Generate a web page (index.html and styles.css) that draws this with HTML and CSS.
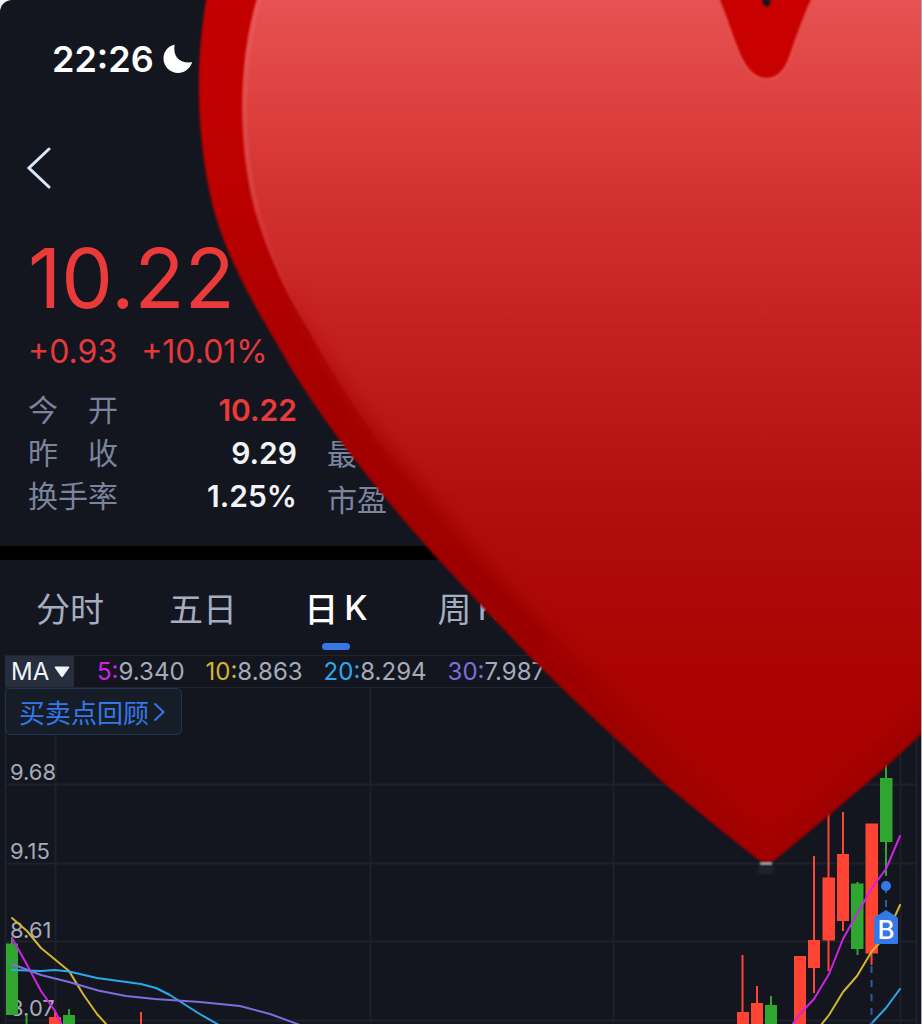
FILE: index.html
```html
<!DOCTYPE html>
<html lang="zh-CN">
<head>
<meta charset="utf-8">
<meta name="viewport" content="width=device-width, initial-scale=1">
<title>日K</title>
<link rel="stylesheet" href="styles.css">
</head>
<body>
<div class="app">
  <header class="status">
    <time>22:26</time>
    <svg class="moon" viewBox="0 0 30 30" aria-hidden="true"><path d="M11.500 .5 C10 13 16 19.500 29.200 18.300 C26.500 25.500 21 29 15.200 29 C7 29 .5 22.500 .5 14.500 C.5 8 4.500 2.500 11.500 .5 Z"/></svg>
  </header>
  <nav class="nav">
    <button class="back" type="button" aria-label="返回">
      <svg viewBox="0 0 24 42" aria-hidden="true"><path d="M22 2 L2 21 L22 40"/></svg>
    </button>
  </nav>
  <main>
    <section class="quote">
      <div class="price">10.22</div>
      <div class="change"><span>+0.93</span><span>+10.01%</span></div>
      <div class="stats">
        <dl class="list">
          <div class="row"><dt>今　开</dt><dd class="up">10.22</dd></div>
          <div class="row"><dt>昨　收</dt><dd>9.29</dd></div>
          <div class="row"><dt>换手率</dt><dd>1.25%</dd></div>
        </dl>
        <ul class="more"><li>最</li><li>市盈</li></ul>
      </div>
    </section>
    <section class="kline">
      <div class="tabs">
        <button class="tab" type="button">分时</button>
        <button class="tab" type="button">五日</button>
        <button class="tab active" type="button"><span>日</span><span>K</span></button>
        <button class="tab" type="button"><span>周</span><span>K</span></button>
      </div>
      <div class="averages">
        <label class="picker">
          <select aria-label="指标"><option>MA</option></select>
          <svg viewBox="0 0 16 12" aria-hidden="true"><path d="M1.500 .5 H14.500 Q16 .5 15 2 L9 10.500 Q8 12 7 10.500 L1 2 Q0 .5 1.500 .5Z"/></svg>
        </label>
        <span class="avg"><b class="ma5">5:</b>9.340</span>
        <span class="avg"><b class="ma10">10:</b>8.863</span>
        <span class="avg"><b class="ma20">20:</b>8.294</span>
        <span class="avg"><b class="ma30">30:</b>7.987</span>
      </div>
      <div class="chart">
        <a class="review" href="#review">买卖点回顾<svg viewBox="0 0 12 20" aria-hidden="true"><path d="M1.500 1.500 L10.500 10 L1.500 18.500"/></svg></a>
        <svg class="plot" viewBox="0 688 921 336" role="img" aria-label="日K线图">
          <path class="grid" d="M5.500 688V1024M55.500 688V1024M370.500 688V1024M613.500 688V1024M900.500 688V1024M916.500 688V1024M5 784.500H916M5 863.500H916M5 941.500H916M5 1020.500H916"/>
          <g class="scale">
            <text x="10" y="780">9.68</text>
            <text x="10" y="859">9.15</text>
            <text x="10" y="938">8.61</text>
            <text x="10" y="1016">8.07</text>
          </g>
          <g class="rise">
            <path d="M49 1017h12v7h-12zM54 1012h2v6h-2zM140 1012h2v12h-2z"/>
            <path d="M737 1012h12v12h-12zM741.500 955h2v58h-2zM751 1003h12v21h-12zM756 986h2v18h-2z"/>
            <path d="M794 956h12v68h-12zM808 940h12v28h-12zM813 856h2v137h-2z"/>
            <path d="M822.500 877.500h12.500v63h-12.500zM827.500 812h2v159h-2zM837 854h12v67h-12zM842 812h2v119h-2z"/>
            <path d="M865.500 823.500h12.500v130h-12.500zM870.500 950h2v15h-2z"/>
          </g>
          <g class="fall">
            <path d="M6 943.500h12v71.500h-12zM11 937h2v8h-2zM25.500 1015h2v9h-2zM63 1015h12v9h-12zM68 1009h2v7h-2z"/>
            <path d="M765 1005h12v19h-12zM770 996h2v10h-2zM851 883.500h12.500v65.500h-12.500zM856.500 882h2v73h-2z"/>
            <path d="M880 778h12.500v64h-12.500zM885 760h2v116h-2z"/>
          </g>
          <polyline class="line ma10" points="12,918 27,931 41,948 69,971 83,994 97,1014 107,1025"/>
          <polyline class="line ma5" points="12,938 26,963 41,991 55,1011 62,1025"/>
          <polyline class="line ma20" points="12,970 41,971 55,970 69,971.500 97,978 141,984 156,988 170,995 198,1013 219,1025"/>
          <polyline class="line ma30" points="12,964 41,975 69,982 98,990.500 126,996 155,999 200,1002 240,1006 270,1014 300,1025"/>
          <polyline class="line ma5" points="792,1025 800,1014 814,999 829,974 843,939 857,914 872,888 886,869 900,836"/>
          <polyline class="line ma10" points="821,1025 829,1015 843,992 857,976 872,951 886,936 900,905"/>
          <polyline class="line ma20" points="870,1025 886,1008 900,989"/>
          <path class="dash" d="M886 886V910M871.500 966V1024"/>
          <circle class="pin" cx="886" cy="886" r="5"/>
          <path class="pin" d="M886 910L897 917Q898 918 898 919V943Q898 944 897 944H875Q874 944 874 943V919Q874 918 875 917Z"/>
          <text class="mark" x="886" y="939">B</text>
        </svg>
      </div>
    </section>
  </main>
  <svg class="heart" viewBox="0 0 921 1024" aria-hidden="true">
    <defs>
      <linearGradient id="rim" gradientUnits="userSpaceOnUse" x1="0" y1="0" x2="0" y2="862">
        <stop offset="0" stop-color="#c40000"/><stop offset=".2" stop-color="#be0000"/><stop offset=".46" stop-color="#a60000"/><stop offset=".7" stop-color="#9c0000"/><stop offset="1" stop-color="#a20000"/>
      </linearGradient>
      <linearGradient id="face" gradientUnits="userSpaceOnUse" x1="0" y1="0" x2="0" y2="862">
        <stop offset="0" stop-color="#e75252"/><stop offset=".06" stop-color="#e24a49"/><stop offset=".12" stop-color="#de4040"/><stop offset=".23" stop-color="#d23131"/><stop offset=".35" stop-color="#c82424"/><stop offset=".48" stop-color="#bb1818"/><stop offset=".6" stop-color="#b00d0d"/><stop offset=".78" stop-color="#aa0302"/><stop offset="1" stop-color="#a80000"/>
      </linearGradient>
      <linearGradient id="shine" gradientUnits="userSpaceOnUse" x1="0" y1="0" x2="0" y2="320">
        <stop offset="0" stop-color="#ea5c5a" stop-opacity=".7"/><stop offset=".6" stop-color="#e05050" stop-opacity=".5"/><stop offset="1" stop-color="#d03030" stop-opacity="0"/>
      </linearGradient>
      <linearGradient id="fade" gradientUnits="userSpaceOnUse" x1="0" y1="0" x2="0" y2="500">
        <stop offset=".55" stop-color="#fff"/><stop offset="1" stop-color="#000"/>
      </linearGradient>
      <mask id="upper" maskUnits="userSpaceOnUse" x="0" y="-20" width="960" height="600"><path fill="url(#fade)" d="M0 -20H960V580H0Z"/></mask>
      <filter id="edge" color-interpolation-filters="sRGB"><feGaussianBlur stdDeviation="1"/></filter>
      <filter id="soft" color-interpolation-filters="sRGB" x="-20%" y="-20%" width="140%" height="140%"><feGaussianBlur stdDeviation="9"/></filter>
      <clipPath id="outline"><path d="M207 -5C195 60 196 135 212 203C222 245 246 291 267 327C281 351 295 376 310 398C348 455 400 517 437 558L488 613L530 657L573 699L617 740L667 786L717 827L757 859Q765 865 775 860L833 812L887 766L930 726V-5Z"/></clipPath>
    </defs>
    <path fill="url(#rim)" filter="url(#edge)" d="M207 -5C195 60 196 135 212 203C222 245 246 291 267 327C281 351 295 376 310 398C348 455 400 517 437 558L488 613L530 657L573 699L617 740L667 786L717 827L757 859Q765 865 775 860L833 812L887 766L930 726V-5Z"/>
    <g clip-path="url(#outline)">
      <path fill="url(#face)" filter="url(#soft)" d="M275 200C290 290 330 372 405 465C480 560 590 680 768 845L870 755L980 660V200Z"/>
      <g mask="url(#upper)">
        <path fill="url(#face)" filter="url(#edge)" d="M258 -5C238 60 237 140 254 208C266 250 284 292 310 332C335 378 365 425 405 475L440 515H950V-5Z"/>
        <path fill="none" stroke="url(#shine)" stroke-width="4" filter="url(#edge)" d="M261 -5C241 60 240 140 257 208C269 250 287 292 313 332"/>
      </g>
      <path fill="#c80000" stroke="#e65352" stroke-width="2" filter="url(#edge)" d="M717 -5C727 19 733 40 741 58Q751 79 767 79Q781 79 789 60C796 40 803 18 814 -5Z"/>
    </g>
    <path fill="#13161f" filter="url(#edge)" d="M762 -4H771L770 4Q767 9 763 4Z"/>
    <path fill="#aaa" filter="url(#edge)" d="M760 862H772V865H760Z"/>
    <path fill="#555" opacity=".2" filter="url(#edge)" d="M758 866H774V874H758Z"/>
  </svg>
</div>
</body>
</html>
```
FILE: styles.css
```css
* { box-sizing: border-box; }

body {
  margin: 0;
  background: #f4f4f4;
  font-family: Inter, "Noto Sans CJK SC", sans-serif;
  color: #f1f3f8;
}

button, select {
  margin: 0;
  padding: 0;
  border: 0;
  background: none;
  color: inherit;
  font: inherit;
  appearance: none;
}

.app {
  position: relative;
  min-height: 100vh;
  overflow: hidden;
  border-right: 1px solid #a4a8ae;
  border-top-left-radius: 12px;
  background: #13161f;
}

.status {
  display: flex;
  align-items: center;
  gap: 9px;
  height: 118px;
  padding-left: 52px;
  font-size: 36px;
  font-weight: 600;
  color: #fff;
}

.moon { width: 30px; height: 30px; fill: #fff; }

.nav {
  display: flex;
  align-items: center;
  height: 100px;
  padding-left: 27px;
}

.back { display: flex; }

.back svg {
  width: 24px;
  height: 42px;
  fill: none;
  stroke: #dce6fb;
  stroke-width: 3;
  stroke-linecap: round;
}

.quote {
  padding: 15px 28px 23px;
  border-bottom: 14px solid #000;
}

.price {
  font-size: 82px;
  line-height: 92px;
  color: #ea3a3a;
}

.change {
  display: flex;
  gap: 24px;
  font-size: 32px;
  line-height: 54px;
  color: #e5393b;
}

.stats {
  display: flex;
  gap: 30px;
  padding-top: 10px;
  font-size: 30px;
  color: #7b849c;
}

.list { width: 269px; margin: 0; }

.row {
  display: flex;
  justify-content: space-between;
  line-height: 43px;
}

.row dd {
  margin: 0;
  font-weight: 600;
  color: #f1f3f8;
}

.row .up { color: #ea3a3a; }

.more {
  margin: 42px 0 0;
  padding: 0;
  list-style: none;
  line-height: 46px;
}

.tabs {
  display: flex;
  gap: 65px;
  height: 95px;
  padding-left: 36px;
}

.tab {
  position: relative;
  display: flex;
  justify-content: center;
  align-items: center;
  gap: 6px;
  min-width: 68px;
  font-size: 34px;
  color: #a5adc0;
}

.active { font-weight: 500; color: #fff; }

.active::after {
  content: "";
  position: absolute;
  bottom: 5px;
  left: 50%;
  width: 28px;
  height: 7px;
  margin-left: -14px;
  border-radius: 4px;
  background: #3478ea;
}

.averages {
  display: flex;
  align-items: center;
  gap: 21px;
  height: 33px;
  margin-left: 5px;
  border: solid #1f232d;
  border-width: 1px 0;
  font-size: 24px;
  color: #a5abba;
}

.averages b { font-weight: 400; }

.picker {
  display: flex;
  align-items: center;
  gap: 4px;
  height: 31px;
  padding: 0 4px 0 6px;
  margin-right: 2px;
  background: #262d3d;
  color: #f1f3f8;
}

.picker svg { width: 16px; height: 12px; fill: #f1f3f8; }

.ma5 { color: #cf22e6; stroke: #cf22e6; }
.ma10 { color: #d4b52c; stroke: #d4b52c; }
.ma20 { color: #2ba9ee; stroke: #2ba9ee; }
.ma30 { color: #7f6ddd; stroke: #7f6ddd; }

.chart { position: relative; }

.review {
  position: absolute;
  top: 0;
  left: 5px;
  display: flex;
  align-items: center;
  gap: 4px;
  height: 47px;
  padding: 0 16px 0 13px;
  border: 1px solid #213557;
  border-radius: 5px;
  background: #171d27;
  font-size: 26px;
  color: #3478ea;
  text-decoration: none;
}

.review svg {
  width: 12px;
  height: 20px;
  fill: none;
  stroke: #3478ea;
  stroke-width: 2;
}

.plot { display: block; width: 100%; }

.grid { fill: none; stroke: #1d212b; stroke-width: 2; }
.scale { fill: #a5abba; font-size: 22px; }
.rise { fill: #ff4433; }
.fall { fill: #30a52f; }
.line { fill: none; stroke-width: 2; stroke-linejoin: round; stroke-linecap: round; }
.dash { fill: none; stroke: #2a5ba8; stroke-width: 2; stroke-dasharray: 7 7; }
.pin { fill: #3478ea; }
.mark { fill: #fff; font-size: 26px; font-weight: 500; text-anchor: middle; }

.heart {
  position: absolute;
  top: 0;
  left: 0;
  width: 100%;
  pointer-events: none;
}
```
